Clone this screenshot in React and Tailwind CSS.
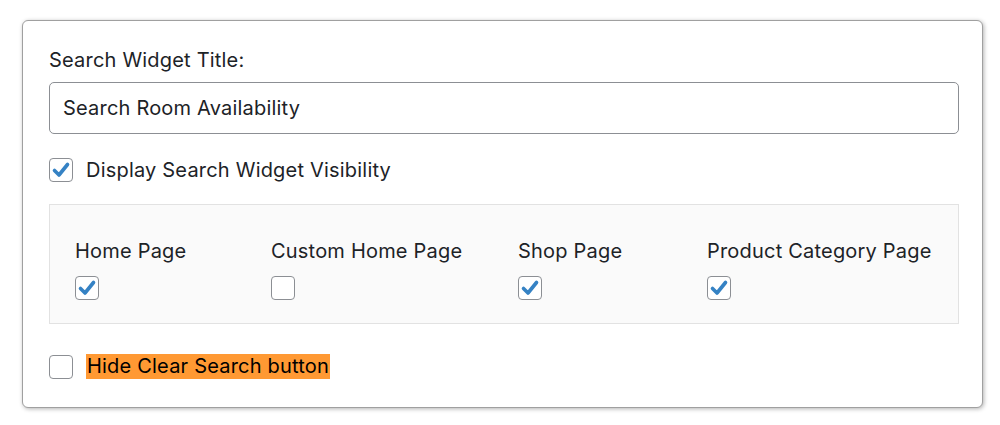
import React from 'react';

const font = { fontFamily: 'Inter, "Noto Sans", sans-serif' };

function Check({ checked }) {
    return (
        <span className="flex h-6 w-6 shrink-0 items-center justify-center rounded-[4px] border-[1.5px] border-[#8c8f94] bg-white">
            {checked && (
                <svg width="20" height="20" viewBox="0 0 20 20">
                    <path d="M3.5 10.5 L8 15 L16.5 4.5" fill="none" stroke="#3582c4" strokeWidth="3.6" strokeLinecap="round" strokeLinejoin="round" />
                </svg>
            )}
        </span>
    );
}

const pages = [
    { label: 'Home Page', checked: true, w: 'w-[196px]' },
    { label: 'Custom Home Page', checked: false, w: 'w-[247px]' },
    { label: 'Shop Page', checked: true, w: 'w-[189px]' },
    { label: 'Product Category Page', checked: true, w: 'flex-1' },
];

export default function App() {
    return (
        <div className="h-[425px] w-[1000px] bg-white pl-[22px] pt-[20px] text-[#1d2327] tracking-[0.2px]" style={font}>
            <div className="h-[388px] w-[961px] rounded-[6px] border border-[#a0a0a0] bg-white pl-[26px] pr-[23px] pt-[27px] shadow-[1px_1px_4px_rgba(0,0,0,0.3)]">
                <div className="text-[20px] leading-[24px]">Search Widget Title:</div>
                <div className="mt-[10px] flex h-[52px] items-center rounded-[5px] border-[1.5px] border-[#8c8f94] px-[13px] text-[20px] leading-[24px]">
                    Search Room Availability
                </div>
                <label className="mt-[24px] flex items-center gap-[13px] text-[20px] leading-[24px]">
                    <Check checked />
                    <span>Display Search Widget Visibility</span>
                </label>
                <div className="mt-[22px] flex h-[120px] border-[1.5px] border-[#e2e2e2] bg-[#fafafa] pl-[25px] pt-[34px]">
                    {pages.map(p => (
                        <div key={p.label} className={`${p.w} flex flex-col`}>
                            <span className="text-[20px] leading-[24px]">{p.label}</span>
                            <span className="mt-[13px]"><Check checked={p.checked} /></span>
                        </div>
                    ))}
                </div>
                <label className="mt-[30px] flex items-center gap-[13px] text-[20px] leading-[24px]">
                    <Check checked={false} />
                    <span className="bg-[#ff9933] px-px leading-[25px] text-black">Hide Clear Search button</span>
                </label>
            </div>
        </div>
    );
}
